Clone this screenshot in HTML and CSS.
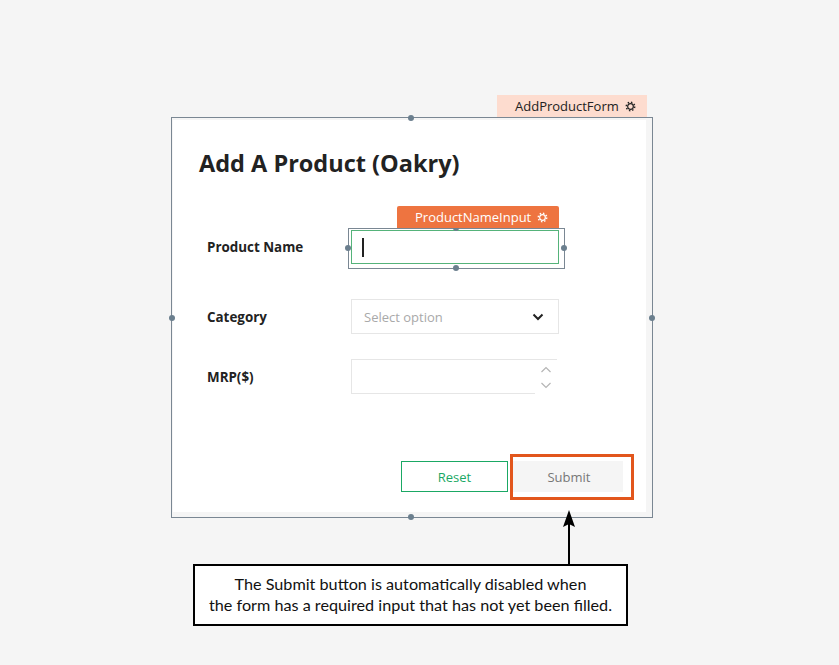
FILE: index.html
```html
<!DOCTYPE html>
<html>
<head>
<meta charset="utf-8">
<link rel="stylesheet" href="styles.css">
</head>
<body>
<div class="stage">
  <div class="card">
    <h1 class="title">Add A Product (Oakry)</h1>
    <div class="form">
      <div class="row row-name">
        <label class="label">Product Name</label>
        <div class="text-input"><span class="caret"></span></div>
      </div>
      <div class="row row-cat">
        <label class="label">Category</label>
        <div class="select">
          <span class="placeholder">Select option</span>
          <svg class="chev" width="12" height="8" viewBox="0 0 12 8"><path d="M1.5 1.5 L6 6 L10.5 1.5" fill="none" stroke="#222" stroke-width="2"/></svg>
        </div>
      </div>
      <div class="row row-mrp">
        <label class="label">MRP($)</label>
        <div class="number">
          <div class="num-field"></div>
          <div class="spinner">
            <svg width="12" height="8" viewBox="0 0 12 8"><path d="M1.5 6 L6 1.5 L10.5 6" fill="none" stroke="#b5b5b5" stroke-width="1.2"/></svg>
            <svg width="12" height="8" viewBox="0 0 12 8"><path d="M1.5 2 L6 6.5 L10.5 2" fill="none" stroke="#b5b5b5" stroke-width="1.2"/></svg>
          </div>
        </div>
      </div>
    </div>
    <div class="actions">
      <button class="btn btn-reset">Reset</button>
      <button class="btn btn-submit">Submit</button>
    </div>
  </div>

  <!-- overlays: selection frames, tags, annotation -->
  <div class="sel sel-form"></div>
  <span class="handle" style="left:411px;top:118px"></span>
  <span class="handle" style="left:172px;top:318px"></span>
  <span class="handle" style="left:652px;top:318px"></span>
  <span class="handle" style="left:411px;top:517px"></span>
  <div class="tag tag-form">AddProductForm
    <svg class="gear" width="11" height="11" viewBox="0 0 12 12"><circle cx="6" cy="6" r="4.6" fill="none" stroke="currentColor" stroke-width="1.6" stroke-dasharray="1.6 2" /><circle cx="6" cy="6" r="3.1" fill="none" stroke="currentColor" stroke-width="1.3"/></svg>
  </div>

  <div class="sel sel-input"></div>
  <span class="handle" style="left:456px;top:228px"></span>
  <span class="handle" style="left:348px;top:248px"></span>
  <span class="handle" style="left:564px;top:248px"></span>
  <span class="handle" style="left:456px;top:268px"></span>
  <div class="tag tag-input">ProductNameInput
    <svg class="gear" width="11" height="11" viewBox="0 0 12 12"><circle cx="6" cy="6" r="4.6" fill="none" stroke="currentColor" stroke-width="1.6" stroke-dasharray="1.6 2" /><circle cx="6" cy="6" r="3.1" fill="none" stroke="currentColor" stroke-width="1.3"/></svg>
  </div>

  <div class="highlight"></div>
  <svg class="arrow" width="20" height="56" viewBox="0 0 20 56"><line x1="10" y1="14" x2="10" y2="56" stroke="#000" stroke-width="2"/><path d="M10 0 L16 17 L10 14 L4 17 Z" fill="#000"/></svg>
  <div class="callout">The Submit button is automatically disabled when<br>the form has a required input that has not yet been filled.</div>
</div>
</body>
</html>
```
FILE: styles.css
```css
* { box-sizing: border-box; }
html, body { margin: 0; padding: 0; }
body {
  background: #f5f5f5;
  font-family: "Open Sans", "Noto Sans", sans-serif;
  color: #222;
}
.stage {
  position: relative;
  width: 839px;
  height: 665px;
  padding-top: 120px;
  padding-left: 173px;
}
.card {
  width: 473px;
  height: 392px;
  background: #fff;
  padding: 27px 23px 0 26px;
  display: flex;
  flex-direction: column;
}
.title {
  margin: 0;
  font-size: 23.5px;
  line-height: 32px;
  font-weight: 700;
  color: #222;
  letter-spacing: 0;
}
.form {
  padding-left: 8px;
  margin-top: 51px;
  display: flex;
  flex-direction: column;
}
.row {
  display: grid;
  grid-template-columns: 144px 208px;
  align-items: center;
}
.row-cat { margin-top: 35px; }
.row-mrp { margin-top: 25px; }
.label {
  font-size: 13.4px;
  font-weight: 700;
  color: #222;
}
.text-input {
  height: 34px;
  border: 1px solid #55b37a;
  position: relative;
}
.caret {
  position: absolute;
  left: 10px;
  top: 7px;
  width: 1.5px;
  height: 19px;
  background: #222;
}
.select {
  height: 35px;
  border: 1px solid #e6e6e6;
  display: flex;
  align-items: center;
  justify-content: space-between;
  padding: 0 14px 0 12px;
}
.placeholder {
  font-size: 13px;
  color: #a9a9a9;
}
.number {
  height: 35px;
  display: flex;
  width: 206px;
}
.num-field {
  flex: 1;
  border: 1px solid #e6e6e6;
  border-right: none;
}
.spinner {
  width: 22px;
  border-top: 1px solid #e6e6e6;
  display: flex;
  flex-direction: column;
  align-items: center;
  justify-content: center;
  gap: 7px;
}
.actions {
  margin-top: auto;
  margin-bottom: 20px;
  display: flex;
  justify-content: flex-end;
  gap: 5px;
}
.btn {
  height: 31px;
  font-family: "Open Sans", "Noto Sans", sans-serif;
  font-size: 13px;
  border-radius: 0;
  cursor: pointer;
}
.btn-reset {
  width: 107px;
  background: #fff;
  border: 1px solid #1aa864;
  color: #1aa864;
}
.btn-submit {
  width: 110px;
  background: #f5f5f5;
  border: none;
  color: #777;
  padding-left: 8px;
}
.sel {
  position: absolute;
  border: 1px solid #7a8793;
  pointer-events: none;
}
.sel-form { left: 171px; top: 117px; width: 482px; height: 401px; }
.sel-input { left: 348px; top: 228px; width: 217px; height: 41px; }
.handle {
  position: absolute;
  width: 6px;
  height: 6px;
  margin: -3px 0 0 -3px;
  border-radius: 50%;
  background: #6b7f8e;
}
.tag {
  position: absolute;
  height: 22px;
  display: flex;
  align-items: center;
  font-size: 13px;
  padding-left: 18px;
  gap: 6px;
}
.tag-form {
  left: 497px;
  top: 95px;
  width: 150px;
  background: #fddccf;
  color: #222;
}
.tag-input {
  left: 397px;
  top: 206px;
  width: 162px;
  background: #ee7440;
  color: #fff;
  border-radius: 2px 2px 0 0;
}
.gear { flex: none; }
.highlight {
  position: absolute;
  left: 510px;
  top: 454px;
  width: 124px;
  height: 46px;
  border: 3px solid #e2561c;
}
.arrow {
  position: absolute;
  left: 559px;
  top: 510px;
}
.callout {
  position: absolute;
  left: 193px;
  top: 564px;
  width: 435px;
  height: 62px;
  border: 2px solid #000;
  background: #fff;
  font-family: "Lato", "Open Sans", sans-serif;
  font-size: 16.2px;
  line-height: 21px;
  text-align: center;
  padding-top: 7px;
  color: #111;
}
```
